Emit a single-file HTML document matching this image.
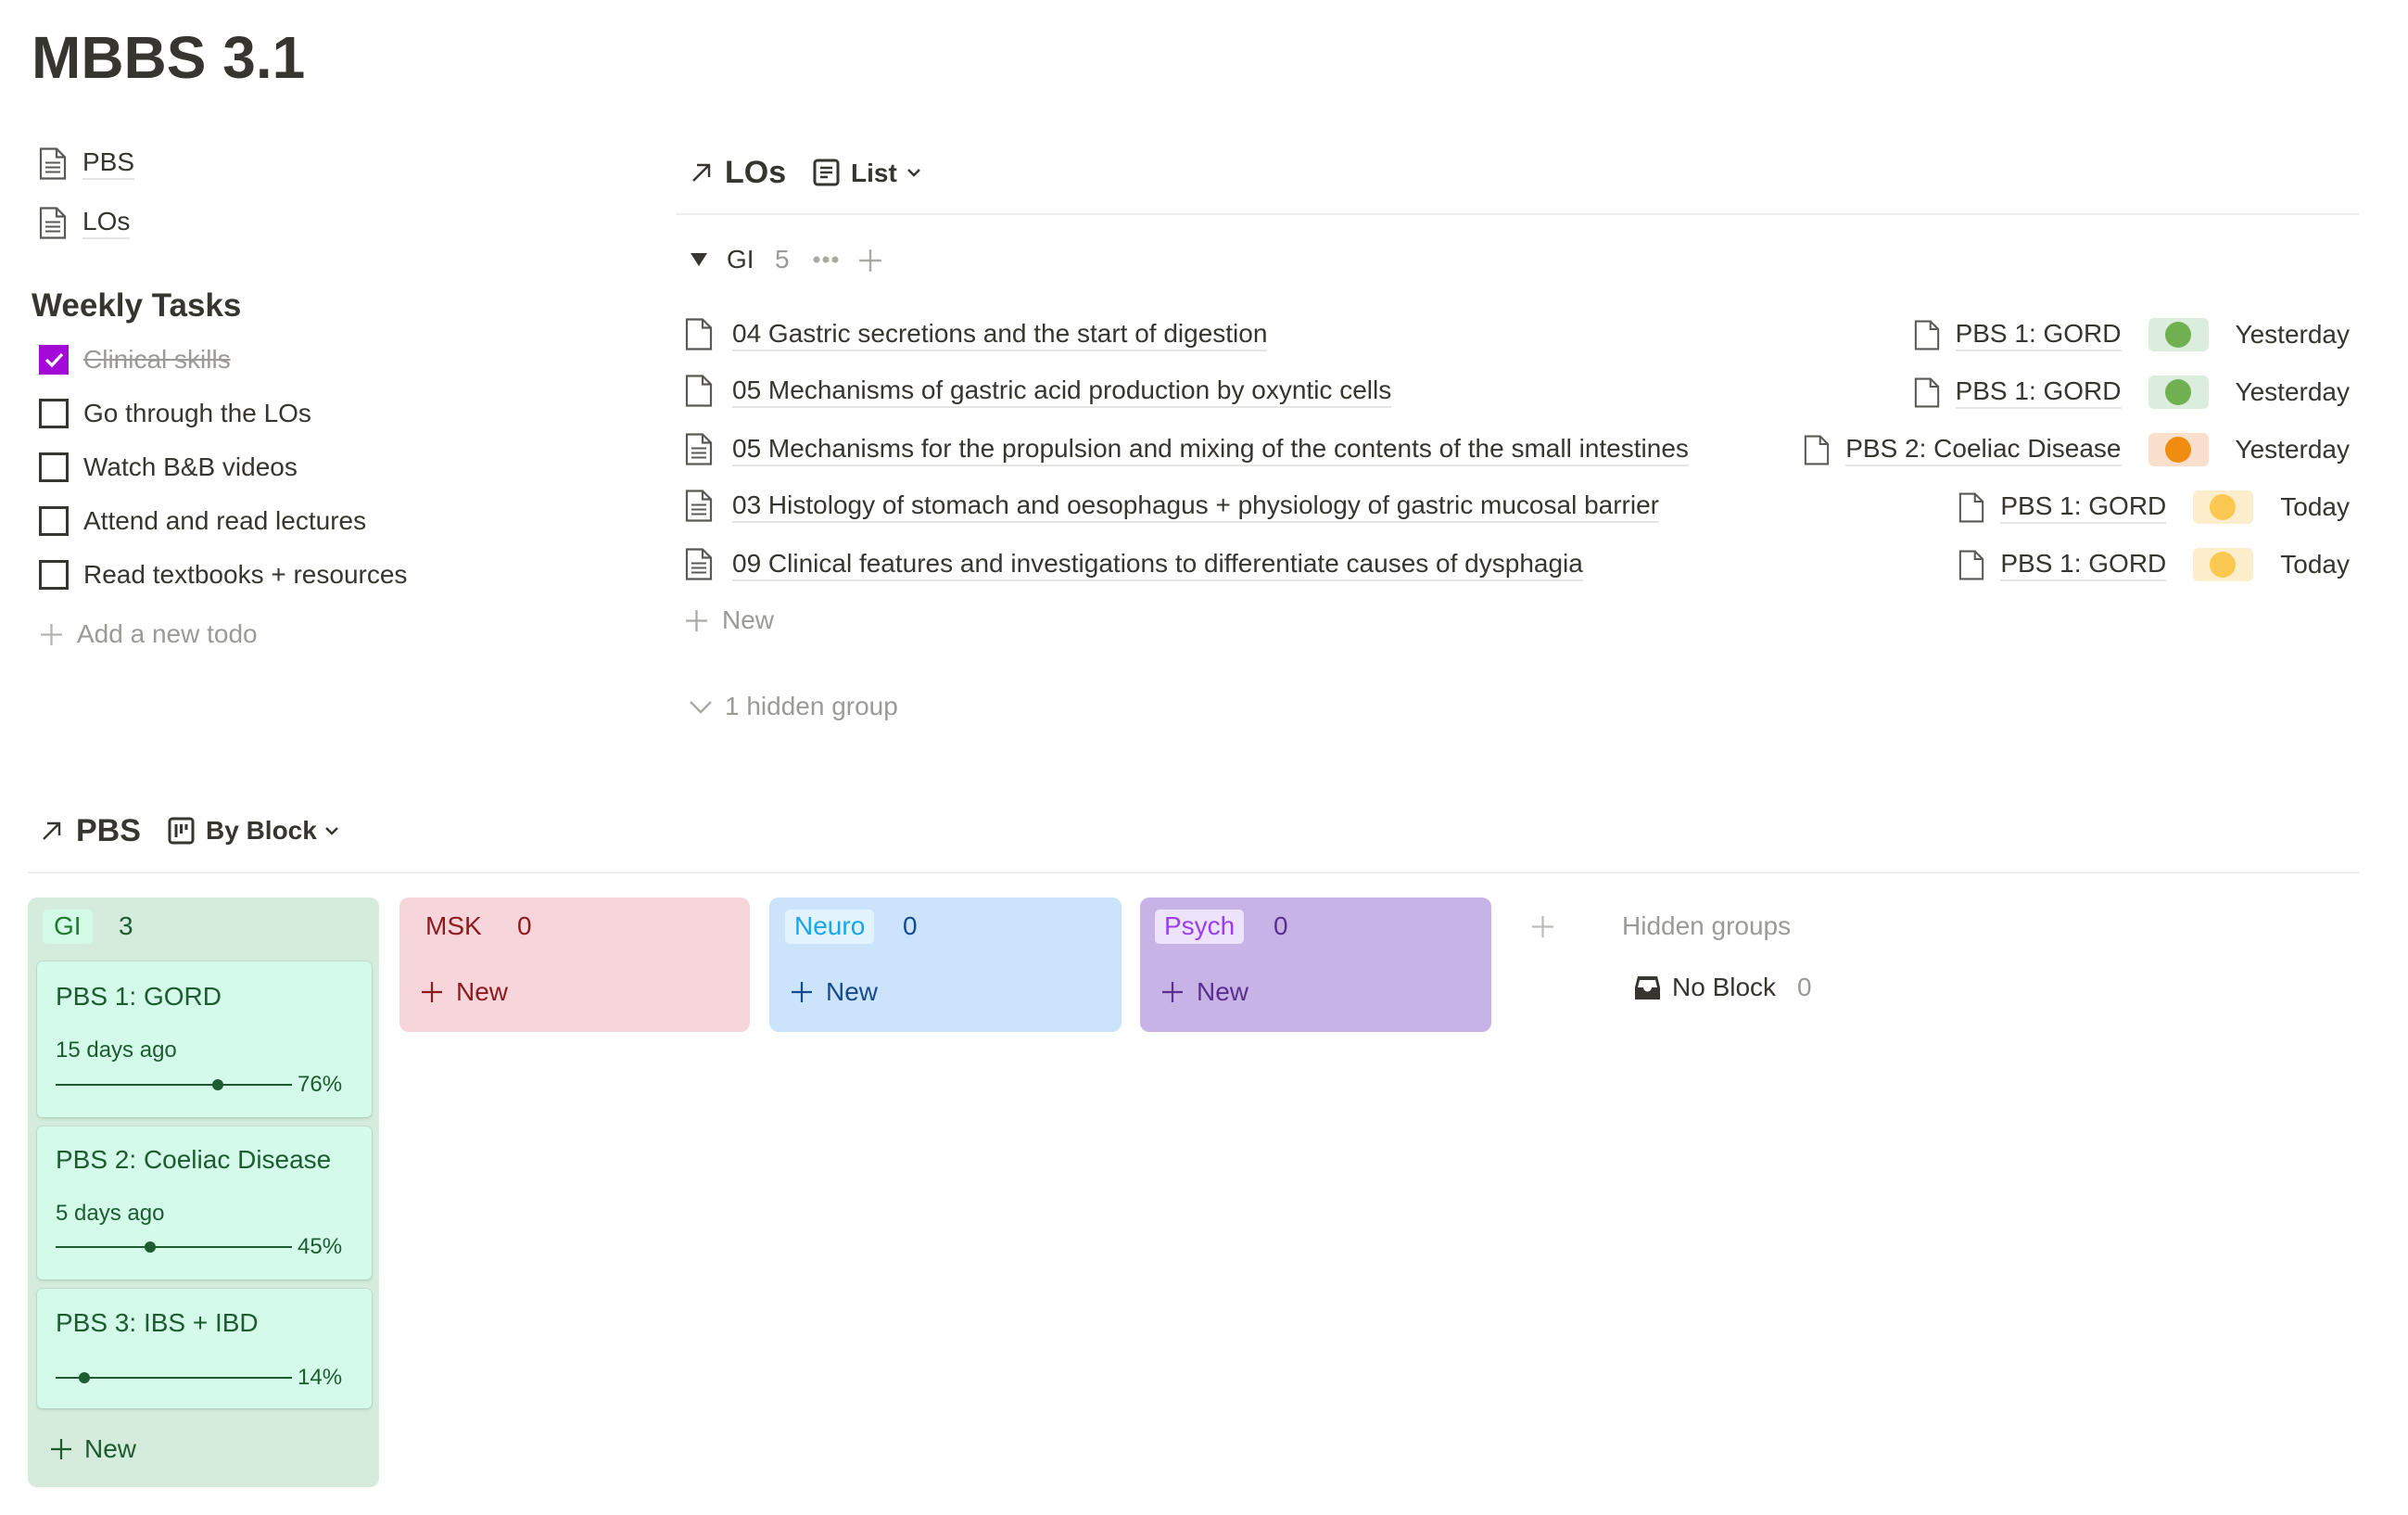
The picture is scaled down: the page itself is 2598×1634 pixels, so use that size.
<!DOCTYPE html>
<html><head><meta charset="utf-8"><style>
*{margin:0;padding:0;box-sizing:border-box}
body{width:2598px;height:1634px;background:#fff;font-family:"Liberation Sans",sans-serif;color:#37352f;position:relative;overflow:hidden}
.a{position:absolute;white-space:nowrap}
.t{font-size:28px;line-height:34px}
.u{border-bottom:2px solid #e6e5e3}
.g{color:#9b9a97}
.cb{position:absolute;width:32px;height:32px;border:3px solid #37352f}
.col{position:absolute;border-radius:10px}
.card{position:absolute;left:10px;width:361px;background:#d4fbea;border-radius:6px;box-shadow:0 0 0 1px rgba(15,80,40,.08),0 2px 3px rgba(15,80,40,.12)}
.gt{color:#1d5b30}
.bar{position:absolute;height:2px;background:#1d5b30}
.dot{position:absolute;width:12px;height:12px;border-radius:50%;background:#1d5b30}
.pill{display:inline-block;width:65px;height:36px;border-radius:6px;position:relative;vertical-align:middle}
.pill i{position:absolute;left:18px;top:4px;width:28px;height:28px;border-radius:50%}
.row{position:absolute;right:63px;display:flex;align-items:center;gap:29px;font-size:28px;line-height:34px}
.sm{font-size:24px;line-height:28px}
</style></head><body>

<svg width="0" height="0" style="position:absolute"><defs>
<symbol id="doc" viewBox="0 0 30 36"><path d="M2 2h17l9 9v23H2z M19 2v9h9" fill="none" stroke="#5a5955" stroke-width="2.2" stroke-linejoin="miter"/></symbol>
<symbol id="doct" viewBox="0 0 30 36"><path d="M2 2h17l9 9v23H2z M19 2v9h9" fill="none" stroke="#5a5955" stroke-width="2.2"/><path d="M7 17h16M7 22h16M7 27h16" stroke="#5a5955" stroke-width="2"/></symbol>
<symbol id="plus" viewBox="0 0 24 24"><path d="M12 1v22M1 12h22" stroke="currentColor" stroke-width="2.2"/></symbol>
</defs></svg>

<div class="a" style="left:34px;top:24px;font-size:64px;font-weight:bold;line-height:76px">MBBS 3.1</div>

<svg class="a" style="left:42px;top:158px" width="30" height="37"><use href="#doct"/></svg>
<div class="a t u" style="left:89px;top:158px">PBS</div>
<svg class="a" style="left:42px;top:222px" width="30" height="37"><use href="#doct"/></svg>
<div class="a t u" style="left:89px;top:222px">LOs</div>

<div class="a" style="left:34px;top:310px;font-size:35px;font-weight:bold;line-height:40px">Weekly Tasks</div>
<div class="cb" style="left:42px;top:372px;background:#a30ad8;border-color:#a30ad8"><svg width="26" height="26" style="position:absolute;left:0;top:0"><path d="M5 13l6 6 11-12" fill="none" stroke="#fff" stroke-width="3.2"/></svg></div>
<div class="a t" style="left:90px;top:371px;color:#9b9a97;text-decoration:line-through">Clinical skills</div>
<div class="cb" style="left:42px;top:430px"></div><div class="a t" style="left:90px;top:429px">Go through the LOs</div>
<div class="cb" style="left:42px;top:488px"></div><div class="a t" style="left:90px;top:487px">Watch B&amp;B videos</div>
<div class="cb" style="left:42px;top:546px"></div><div class="a t" style="left:90px;top:545px">Attend and read lectures</div>
<div class="cb" style="left:42px;top:604px"></div><div class="a t" style="left:90px;top:603px">Read textbooks + resources</div>
<svg class="a g" style="left:43px;top:672px;color:#b5b4b1" width="25" height="25"><use href="#plus"/></svg>
<div class="a t g" style="left:83px;top:667px">Add a new todo</div>

<!-- LOs -->
<svg class="a" style="left:744px;top:173px" width="26" height="26"><path d="M4 22L21 5M8 5h13v13" fill="none" stroke="#37352f" stroke-width="2.4"/></svg>
<div class="a" style="left:782px;top:165px;font-size:34px;font-weight:bold;line-height:42px">LOs</div>
<svg class="a" style="left:877px;top:171px" width="30" height="30"><rect x="2" y="2" width="25" height="26" rx="3" fill="none" stroke="#37352f" stroke-width="3"/><path d="M8 10h13M8 15h13M8 20h8" stroke="#37352f" stroke-width="2.6"/></svg>
<div class="a" style="left:918px;top:169px;font-size:28px;font-weight:bold;line-height:36px">List</div>
<svg class="a" style="left:978px;top:180px" width="16" height="12"><path d="M2 3l6 6 6-6" fill="none" stroke="#37352f" stroke-width="2.4"/></svg>
<div class="a" style="left:729px;top:230px;width:1816px;height:2px;background:#ededec"></div>

<svg class="a" style="left:744px;top:271px" width="20" height="17"><path d="M1 2h18L10 16z" fill="#37352f"/></svg>
<div class="a t" style="left:784px;top:263px">GI</div>
<div class="a t g" style="left:836px;top:263px">5</div>
<svg class="a" style="left:876px;top:275px" width="30" height="10"><circle cx="5" cy="5" r="3.5" fill="#aaa9a6"/><circle cx="15" cy="5" r="3.5" fill="#aaa9a6"/><circle cx="25" cy="5" r="3.5" fill="#aaa9a6"/></svg>
<svg class="a" style="left:926px;top:268px;color:#aaa9a6" width="26" height="26"><use href="#plus"/></svg>

<svg class="a" style="left:739px;top:342px" width="30" height="37"><use href="#doc"/></svg>
<div class="a t u" style="left:790px;top:343px">04 Gastric secretions and the start of digestion</div>
<svg class="a" style="left:739px;top:403px" width="30" height="37"><use href="#doc"/></svg>
<div class="a t u" style="left:790px;top:404px">05 Mechanisms of gastric acid production by oxyntic cells</div>
<svg class="a" style="left:739px;top:466px" width="30" height="37"><use href="#doct"/></svg>
<div class="a t u" style="left:790px;top:467px">05 Mechanisms for the propulsion and mixing of the contents of the small intestines</div>
<svg class="a" style="left:739px;top:527px" width="30" height="37"><use href="#doct"/></svg>
<div class="a t u" style="left:790px;top:528px">03 Histology of stomach and oesophagus + physiology of gastric mucosal barrier</div>
<svg class="a" style="left:739px;top:590px" width="30" height="37"><use href="#doct"/></svg>
<div class="a t u" style="left:790px;top:591px">09 Clinical features and investigations to differentiate causes of dysphagia</div>

<div class="row" style="top:343px"><span style="display:flex;align-items:center;gap:17px"><svg width="28" height="35"><use href="#doc"/></svg><span class="u">PBS 1: GORD</span></span><span class="pill" style="background:#dbeedd"><i style="background:#70b050"></i></span><span>Yesterday</span></div>
<div class="row" style="top:405px"><span style="display:flex;align-items:center;gap:17px"><svg width="28" height="35"><use href="#doc"/></svg><span class="u">PBS 1: GORD</span></span><span class="pill" style="background:#dbeedd"><i style="background:#70b050"></i></span><span>Yesterday</span></div>
<div class="row" style="top:467px"><span style="display:flex;align-items:center;gap:17px"><svg width="28" height="35"><use href="#doc"/></svg><span class="u">PBS 2: Coeliac Disease</span></span><span class="pill" style="background:#fae0cc"><i style="background:#f08c10"></i></span><span>Yesterday</span></div>
<div class="row" style="top:529px"><span style="display:flex;align-items:center;gap:17px"><svg width="28" height="35"><use href="#doc"/></svg><span class="u">PBS 1: GORD</span></span><span class="pill" style="background:#fcedcb"><i style="background:#fbc852"></i></span><span>Today</span></div>
<div class="row" style="top:591px"><span style="display:flex;align-items:center;gap:17px"><svg width="28" height="35"><use href="#doc"/></svg><span class="u">PBS 1: GORD</span></span><span class="pill" style="background:#fcedcb"><i style="background:#fbc852"></i></span><span>Today</span></div>

<svg class="a" style="left:739px;top:657px;color:#aaa9a6" width="25" height="25"><use href="#plus"/></svg>
<div class="a t g" style="left:779px;top:652px">New</div>
<svg class="a" style="left:743px;top:754px" width="26" height="16"><path d="M2 3l11 11 11-11" fill="none" stroke="#aaa9a6" stroke-width="2.4"/></svg>
<div class="a t g" style="left:782px;top:745px">1 hidden group</div>

<!-- PBS -->
<svg class="a" style="left:43px;top:883px" width="26" height="26"><path d="M4 22L21 5M8 5h13v13" fill="none" stroke="#37352f" stroke-width="2.4"/></svg>
<div class="a" style="left:82px;top:875px;font-size:34px;font-weight:bold;line-height:42px">PBS</div>
<svg class="a" style="left:181px;top:881px" width="30" height="30"><rect x="2" y="2" width="25" height="26" rx="3" fill="none" stroke="#37352f" stroke-width="3"/><path d="M9 8v14M14.5 8v10M20 8v6" stroke="#37352f" stroke-width="3"/></svg>
<div class="a" style="left:222px;top:878px;font-size:28px;font-weight:bold;line-height:36px">By Block</div>
<svg class="a" style="left:350px;top:890px" width="16" height="12"><path d="M2 3l6 6 6-6" fill="none" stroke="#37352f" stroke-width="2.4"/></svg>
<div class="a" style="left:30px;top:940px;width:2515px;height:2px;background:#ededec"></div>

<!-- GI column -->
<div class="col" style="left:30px;top:968px;width:379px;height:636px;background:#d5ebdc">
  <div class="a t" style="left:16px;top:13px;height:37px;padding:1px 12px;background:#d4fbe8;border-radius:5px;color:#1f7a30">GI</div>
  <div class="a t gt" style="left:98px;top:14px">3</div>
  <div class="card" style="top:69px;height:168px">
    <div class="a t gt" style="left:20px;top:21px">PBS 1: GORD</div>
    <div class="a gt sm" style="left:20px;top:82px">15 days ago</div>
    <div class="bar" style="left:20px;top:132px;width:255px"></div><div class="dot" style="left:189px;top:127px"></div>
    <div class="a gt sm" style="left:281px;top:119px">76%</div>
  </div>
  <div class="card" style="top:247px;height:165px">
    <div class="a t gt" style="left:20px;top:19px">PBS 2: Coeliac Disease</div>
    <div class="a gt sm" style="left:20px;top:80px">5 days ago</div>
    <div class="bar" style="left:20px;top:129px;width:255px"></div><div class="dot" style="left:116px;top:124px"></div>
    <div class="a gt sm" style="left:281px;top:116px">45%</div>
  </div>
  <div class="card" style="top:422px;height:129px">
    <div class="a t gt" style="left:20px;top:20px">PBS 3: IBS + IBD</div>
    <div class="bar" style="left:20px;top:95px;width:255px"></div><div class="dot" style="left:45px;top:90px"></div>
    <div class="a gt sm" style="left:281px;top:82px">14%</div>
  </div>
  <svg class="a gt" style="left:24px;top:583px;color:#1d5b30" width="24" height="24"><use href="#plus"/></svg>
  <div class="a t gt" style="left:61px;top:578px">New</div>
</div>

<!-- MSK -->
<div class="col" style="left:431px;top:968px;width:378px;height:145px;background:#f6d6da">
  <div class="a t" style="left:28px;top:14px;color:#8e1a1e">MSK</div>
  <div class="a t" style="left:127px;top:14px;color:#8e1a1e">0</div>
  <svg class="a" style="left:23px;top:90px;color:#8e1a1e" width="24" height="24"><use href="#plus"/></svg>
  <div class="a t" style="left:61px;top:85px;color:#8e1a1e">New</div>
</div>
<!-- Neuro -->
<div class="col" style="left:830px;top:968px;width:380px;height:145px;background:#cce4fb">
  <div class="a t" style="left:17px;top:13px;height:37px;padding:1px 10px;background:#e2f3fd;border-radius:5px;color:#16a6ee">Neuro</div>
  <div class="a t" style="left:144px;top:14px;color:#164a8c">0</div>
  <svg class="a" style="left:23px;top:90px;color:#164a8c" width="24" height="24"><use href="#plus"/></svg>
  <div class="a t" style="left:61px;top:85px;color:#164a8c">New</div>
</div>
<!-- Psych -->
<div class="col" style="left:1230px;top:968px;width:379px;height:145px;background:#c7b3e5">
  <div class="a t" style="left:16px;top:13px;height:37px;padding:1px 10px;background:#ede4fc;border-radius:5px;color:#9b3ef2">Psych</div>
  <div class="a t" style="left:144px;top:14px;color:#5a2f8f">0</div>
  <svg class="a" style="left:23px;top:90px;color:#5a2f8f" width="24" height="24"><use href="#plus"/></svg>
  <div class="a t" style="left:61px;top:85px;color:#5a2f8f">New</div>
</div>

<svg class="a" style="left:1652px;top:987px;color:#bdbcb9" width="25" height="25"><use href="#plus"/></svg>
<div class="a t g" style="left:1750px;top:982px">Hidden groups</div>
<svg class="a" style="left:1763px;top:1051px" width="29" height="29"><path d="M4 2h21l3 12v13H1V14z" fill="#37352f"/><path d="M6 6h17l2 8h-6a4.5 4.5 0 0 1-9 0H4z" fill="#fff"/></svg>
<div class="a t" style="left:1804px;top:1048px">No Block</div>
<div class="a t g" style="left:1939px;top:1048px">0</div>
</body></html>
